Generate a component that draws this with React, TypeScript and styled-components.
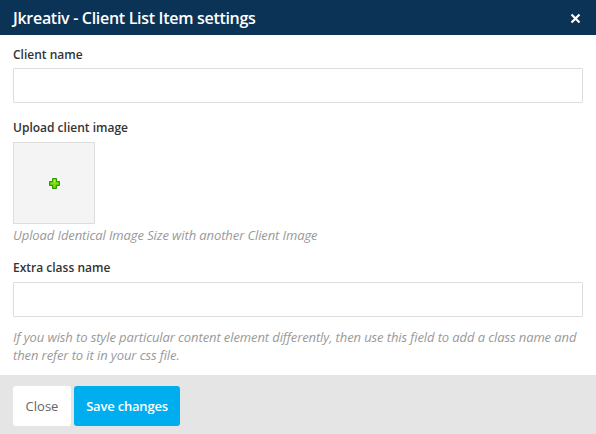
import React from "react";
import styled, { createGlobalStyle } from "styled-components";

const Global = createGlobalStyle`
  html, body { margin: 0; padding: 0; background: #ffffff; }
  body { font-family: "Open Sans", "Noto Sans", sans-serif; }
  * { box-sizing: border-box; }
`;

const Modal = styled.div`
  width: 596px;
  height: 434px;
  display: flex;
  flex-direction: column;
  background: #ffffff;
  overflow: hidden;
`;

const Header = styled.div`
  height: 35px;
  flex: none;
  background: #0b3356;
  display: flex;
  align-items: center;
  justify-content: space-between;
  padding: 0 13px;
`;

const Title = styled.h1`
  margin: 0;
  font-size: 16px;
  font-weight: 600;
  color: #ffffff;
  letter-spacing: -0.3px;
  line-height: 20px;
`;

const CloseX = styled.button`
  border: 0;
  background: none;
  padding: 0;
  width: 14px;
  height: 14px;
  display: flex;
  align-items: center;
  justify-content: center;
  margin-right: 1px;
  margin-top: 1px;
  cursor: pointer;
`;

const Body = styled.div`
  flex: 1;
  display: flex;
  flex-direction: column;
  padding: 11px 13px 0;
`;

const Field = styled.div<{ $gap?: number }>`
  display: flex;
  flex-direction: column;
  margin-bottom: ${(p) => p.$gap ?? 0}px;
`;

const Label = styled.label<{ $mb?: number }>`
  font-size: 12px;
  font-weight: 600;
  color: #333333;
  line-height: 18px;
  margin-bottom: ${(p) => p.$mb ?? 4}px;
`;

const Input = styled.input`
  width: 570px;
  height: 35px;
  border: 1px solid #dddddd;
  border-radius: 1px;
  background: #ffffff;
  outline: none;
  font-family: inherit;
  font-size: 12px;
  padding: 0 8px;
`;

const ImageBox = styled.div`
  width: 82px;
  height: 82px;
  border: 1px solid #dddddd;
  background: #f4f4f4;
  display: flex;
  align-items: center;
  justify-content: center;
`;

const Help = styled.p<{ $mt: number }>`
  margin: ${(p) => p.$mt}px 0 0;
  font-size: 13px;
  font-style: italic;
  color: #999999;
  line-height: 18px;
  letter-spacing: -0.1px;
`;

const Footer = styled.div`
  height: 59px;
  flex: none;
  background: #e5e5e5;
  display: flex;
  align-items: flex-start;
  gap: 3px;
  padding: 11px 13px 0;
`;

const Button = styled.button<{ $primary?: boolean }>`
  height: 40px;
  min-width: ${(p) => (p.$primary ? 106 : 58)}px;
  border: 0;
  border-radius: 3px;
  padding: 0 12px;
  font-family: inherit;
  font-size: 13px;
  font-weight: ${(p) => (p.$primary ? 600 : 400)};
  letter-spacing: ${(p) => (p.$primary ? "-0.2px" : "0")};
  background: ${(p) => (p.$primary ? "#00aeef" : "#ffffff")};
  color: ${(p) => (p.$primary ? "#ffffff" : "#666666")};
  cursor: pointer;
`;

const PlusIcon = () => (
  <svg width="11" height="11" viewBox="0 0 11 11">
    <path
      d="M3.5 0.5h4v3h3v4h-3v3h-4v-3h-3v-4h3z"
      fill="#3fb800"
      stroke="#2a9a00"
      strokeWidth="1"
    />
    <path d="M4.5 1.5h2v3h3v2h-3v3h-2v-3h-3v-2h3z" fill="#8ee000" />
    <path d="M4.5 1.5h2v3h-2z" fill="#b8f040" />
  </svg>
);

const XIcon = () => (
  <svg width="11" height="11" viewBox="0 0 11 11">
    <path
      d="M1.5 1.5l8 8M9.5 1.5l-8 8"
      stroke="#ffffff"
      strokeWidth="2.2"
      strokeLinecap="butt"
    />
  </svg>
);

export default function App() {
  return (
    <>
      <Global />
      <Modal>
        <Header>
          <Title>Jkreativ - Client List Item settings</Title>
          <CloseX aria-label="Close">
            <XIcon />
          </CloseX>
        </Header>
        <Body>
          <Field $gap={16}>
            <Label>Client name</Label>
            <Input type="text" />
          </Field>
          <Field $gap={15}>
            <Label $mb={5}>Upload client image</Label>
            <ImageBox>
              <PlusIcon />
            </ImageBox>
            <Help $mt={2}>Upload Identical Image Size with another Client Image</Help>
          </Field>
          <Field>
            <Label $mb={5}>Extra class name</Label>
            <Input type="text" />
            <Help $mt={11}>
              If you wish to style particular content element differently, then use this
              field to add a class name and then refer to it in your css file.
            </Help>
          </Field>
        </Body>
        <Footer>
          <Button>Close</Button>
          <Button $primary>Save changes</Button>
        </Footer>
      </Modal>
    </>
  );
}
